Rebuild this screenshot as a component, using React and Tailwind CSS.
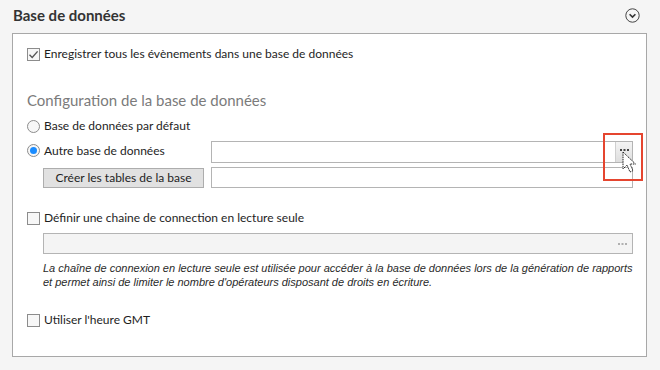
const UI = { fontFamily: 'Lato, "Noto Sans", sans-serif' };
const TAHOMA = { fontFamily: '"Liberation Sans", "DejaVu Sans", sans-serif' };

function Check({ checked }) {
  return (
    <span className="w-[13px] h-[13px] shrink-0 border border-[#8c8c8c] bg-[#f7f7f7] flex items-center justify-center">
      {checked && (
        <svg width="11" height="11" viewBox="0 0 11 11">
          <path d="M1.5 5.8 L4.2 8.4 L9.6 2.4" fill="none" stroke="#555" strokeWidth="1.4" />
        </svg>
      )}
    </span>
  );
}

function Radio({ checked }) {
  return (
    <span className="w-[13px] h-[13px] shrink-0 rounded-full border border-[#8c8c8c] bg-[#f7f7f7] flex items-center justify-center">
      {checked && <span className="w-[7px] h-[7px] rounded-full bg-[#1a8cff]" />}
    </span>
  );
}

function Dots({ color }) {
  return (
    <svg width="9" height="3" viewBox="0 0 9 3">
      <rect x="0" y="1" width="2" height="2" fill={color} />
      <rect x="3.5" y="1" width="2" height="2" fill={color} />
      <rect x="7" y="1" width="2" height="2" fill={color} />
    </svg>
  );
}

export default function App() {
  return (
    <div className="relative w-[660px] h-[370px] bg-[#f5f5f5] text-[#1e1e1e] overflow-hidden" style={UI}>
      <div className="h-[33px] flex items-center justify-between pl-[13px] pr-[20px] pb-[2px]">
        <h2 className="text-[15px] font-bold text-[#333] leading-none">Base de données</h2>
        <svg width="15" height="15" viewBox="0 0 15 15">
          <circle cx="7.5" cy="7.5" r="6.7" fill="none" stroke="#444" strokeWidth="1" />
          <path d="M4.6 6.2 L7.5 9.1 L10.4 6.2" fill="none" stroke="#333" strokeWidth="1.6" />
        </svg>
      </div>

      <div className="ml-[12px] w-[635px] h-[324px] border border-[#a8a8a8] bg-white pl-[14px] pr-[13px] text-[12px]">
        <label className="mt-[10px] h-[20px] flex items-center gap-[4px]">
          <Check checked />
          <span>Enregistrer tous les évènements dans une base de données</span>
        </label>

        <h3 className="mt-[26px] h-[20px] flex items-center text-[15px] text-[#7b7b7b]">Configuration de la base de données</h3>

        <label className="mt-[6px] h-[20px] flex items-center gap-[4px]">
          <Radio />
          <span>Base de données par défaut</span>
        </label>

        <div className="mt-[5px] h-[22px] flex items-center">
          <label className="w-[184px] flex items-center gap-[4px] -mt-[3px]">
            <Radio checked />
            <span>Autre base de données</span>
          </label>
          <div className="flex-1 h-[22px] border border-[#b4b4b4] bg-white flex justify-end">
            <div className="w-[17px] h-full bg-gradient-to-b from-[#f4f4f4] to-[#dedede] border-l border-[#cfcfcf] flex items-start justify-center pt-[6px]">
              <Dots color="#444" />
            </div>
          </div>
        </div>

        <div className="mt-[4px] h-[21px] flex items-center">
          <button className="ml-[16px] w-[161px] h-[20px] bg-[#e1e1e1] border border-[#adadad] text-[12px] text-[#1e1e1e] flex items-center justify-center" style={UI}>
            Créer les tables de la base
          </button>
          <div className="ml-[7px] flex-1 h-[21px] border border-[#b4b4b4] bg-white" />
        </div>

        <label className="mt-[20px] h-[20px] flex items-center gap-[4px]">
          <Check />
          <span>Définir une chaine de connection en lecture seule</span>
        </label>

        <div className="mt-[5px] ml-[16px] h-[21px] border border-[#b4b4b4] bg-[#f4f4f4] flex items-center justify-end pr-[5px]">
          <Dots color="#b0b0b0" />
        </div>

        <p className="mt-[7px] ml-[16px] text-[11px] leading-[14px] italic text-[#2a2a2a] whitespace-nowrap" style={TAHOMA}>
          La chaîne de connexion en lecture seule est utilisée pour accéder à la base de données lors de la génération de rapports
          <br />
          et permet ainsi de limiter le nombre d'opérateurs disposant de droits en écriture.
        </p>

        <label className="mt-[21px] h-[20px] flex items-center gap-[4px]">
          <Check />
          <span>Utiliser l'heure GMT</span>
        </label>
      </div>

      <div className="absolute left-[603px] top-[133px] w-[40px] h-[48px] border-2 border-[#e5452f]" />
      <svg className="absolute left-[622px] top-[151px]" width="16" height="24" viewBox="0 0 16 24">
        <path d="M1 1 L1 18 L5 14 L8 21 L11 19.6 L8 13 L13.5 13 Z" fill="#fff" stroke="#222" strokeWidth="1" strokeDasharray="1.5 0.8" strokeLinejoin="round" />
      </svg>
    </div>
  );
}
